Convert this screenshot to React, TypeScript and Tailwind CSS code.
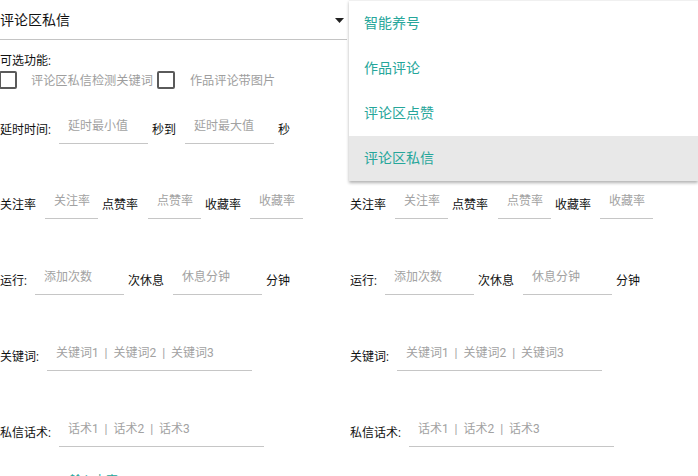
import React from 'react';

const modes = ['智能养号', '作品评论', '评论区点赞', '评论区私信'];

// Underlined text field showing only its hint
const Field = ({ hint, width, className = '' }: { hint: string; width: string; className?: string }) => (
  <div className={`${width} ${className} h-[27px] shrink-0 border-b border-[#c6c6c6] pl-[9px] leading-[18px] text-[#a2a2a2] whitespace-pre`}>
    {hint}
  </div>
);

const Label = ({ children }: { children: React.ReactNode }) => (
  <span className="mt-[4px] shrink-0 leading-[18px] text-[#111] whitespace-nowrap">{children}</span>
);

const CheckBox = ({ className = '' }: { className?: string }) => (
  <span className={`block h-[18px] w-[18px] shrink-0 rounded-[2px] border-2 border-[#5a5a5a] ${className}`} />
);

const TaskForm = ({ showFooter }: { showFooter: boolean }) => (
  <div className="flex flex-col text-[12px]">
    {/* mode spinner */}
    <div className="mr-[2px] flex h-[40px] items-center justify-between border-b border-[#c4c4c4] pt-[2px]">
      <span className="text-[14px] text-[#111]">评论区私信</span>
      <svg width="9" height="5" viewBox="0 0 9 5" className="mr-[3px] -mt-[1px]">
        <path d="M0 0h9L4.5 5z" fill="#222" />
      </svg>
    </div>

    <div className="mt-[13px] leading-[16px] text-[#111]">可选功能:</div>
    <div className="mt-[2px] flex h-[18px] items-center">
      <CheckBox className="-ml-[1px]" />
      <span className="ml-[14px] mt-[2px] text-[12.2px] text-[#9e9e9e]">评论区私信检测关键词</span>
      <CheckBox className="ml-[4px]" />
      <span className="ml-[15px] mt-[2px] text-[12.2px] text-[#9e9e9e]">作品评论带图片</span>
    </div>

    <div className="mt-[28px] flex items-start">
      <Label>延时时间:</Label>
      <Field hint="延时最小值" width="w-[89px]" className="ml-[8px] mr-[4px]" />
      <Label>秒到</Label>
      <Field hint="延时最大值" width="w-[89px]" className="ml-[9px] mr-[4px]" />
      <Label>秒</Label>
    </div>

    <div className="mt-[48px] flex items-start">
      <Label>关注率</Label>
      <Field hint="关注率" width="w-[53px]" className="ml-[9px] mr-[4px]" />
      <Label>点赞率</Label>
      <Field hint="点赞率" width="w-[53px]" className="ml-[10px] mr-[4px]" />
      <Label>收藏率</Label>
      <Field hint="收藏率" width="w-[53px]" className="ml-[9px]" />
    </div>

    <div className="mt-[49px] flex items-start">
      <Label>运行:</Label>
      <Field hint="添加次数" width="w-[89px]" className="ml-[8px] mr-[4px]" />
      <Label>次休息</Label>
      <Field hint="休息分钟" width="w-[89px]" className="ml-[9px] mr-[4px]" />
      <Label>分钟</Label>
    </div>

    <div className="mt-[49px] flex items-start">
      <Label>关键词:</Label>
      <Field hint="关键词1  |  关键词2  |  关键词3" width="w-[205px]" className="ml-[8px]" />
    </div>

    <div className="mt-[49px] flex items-start">
      <Label>私信话术:</Label>
      <Field hint="话术1  |  话术2  |  话术3" width="w-[205px]" className="ml-[8px]" />
    </div>

    {showFooter && (
      <div className="mt-[26px] pl-[70px] leading-[16px] text-[#26a69a]">输入卡密</div>
    )}
  </div>
);

export default function App() {
  return (
    <div className="flex h-[476px] w-[698px] overflow-hidden bg-white font-['Roboto','Noto_Sans_CJK_SC',sans-serif]">
      <div className="w-[349px] shrink-0">
        <TaskForm showFooter />
      </div>
      <div className="relative w-[349px] shrink-0 pl-[1px]">
        <TaskForm showFooter={false} />
        {/* opened spinner list */}
        <div className="absolute left-0 top-0 w-[349px] border-t border-[#f0f0f0] bg-white shadow-[0_2px_3px_rgba(0,0,0,0.3)]">
          {modes.map((m, i) => (
            <div
              key={m}
              className={`flex h-[45px] items-center pl-[15px] text-[14px] text-[#26a69a] ${i === modes.length - 1 ? 'bg-[#e8e8e8]' : ''}`}
            >
              {m}
            </div>
          ))}
        </div>
      </div>
    </div>
  );
}
